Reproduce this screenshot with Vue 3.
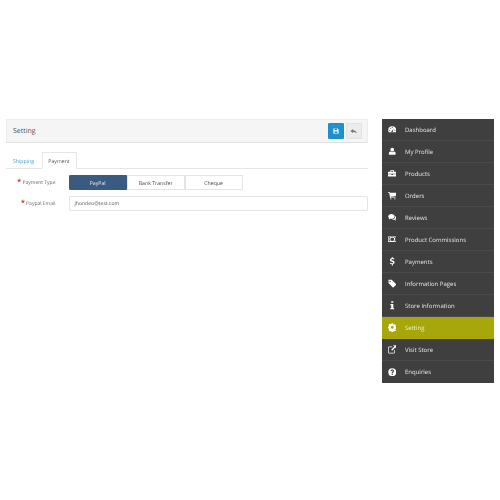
<script setup>
const menu = [
  { label: 'Dashboard', icon: 'dashboard' },
  { label: 'My Profile', icon: 'user' },
  { label: 'Products', icon: 'briefcase' },
  { label: 'Orders', icon: 'cart' },
  { label: 'Reviews', icon: 'comments' },
  { label: 'Product Commissions', icon: 'money' },
  { label: 'Payments', icon: 'dollar' },
  { label: 'Information Pages', icon: 'tag' },
  { label: 'Store Information', icon: 'info' },
  { label: 'Setting', icon: 'cog', active: true },
  { label: 'Visit Store', icon: 'external' },
  { label: 'Enquiries', icon: 'question' },
]

const paymentTypes = ['PayPal', 'Bank Transfer', 'Cheque']
</script>

<template>
  <div class="page">
    <main class="content">
      <div class="panel-head">
        <span class="panel-title">Setting</span>
        <div class="actions">
          <button class="btn btn-save" aria-label="Save">
            <svg viewBox="0 0 16 16" width="6" height="6">
              <path fill="#fff" fill-rule="evenodd" d="M2 1h10l3 3v10a1 1 0 0 1-1 1H2a1 1 0 0 1-1-1V2a1 1 0 0 1 1-1zm2 1v4h7V2H4zm0 7v5h8V9H4z" />
            </svg>
          </button>
          <button class="btn btn-back" aria-label="Back">
            <svg viewBox="0 0 16 16" width="7" height="7">
              <path fill="#777" d="M7 2v3.2c4.600 0 8 2 8 7.800-1.200-3-3.600-4-8-4V12L1 7z" />
            </svg>
          </button>
        </div>
      </div>

      <div class="tabs">
        <a class="tab tab-link">Shipping</a>
        <a class="tab tab-active">Payment</a>
      </div>

      <div class="form-row">
        <label class="form-label"><i>*</i> Payment Type</label>
        <div class="radio-group">
          <span
            v-for="(type, i) in paymentTypes"
            :key="type"
            class="radio-item"
            :class="{ 'radio-item--on': i === 0 }"
          >{{ type }}</span>
        </div>
      </div>

      <div class="form-row">
        <label class="form-label"><i>*</i> Paypal Email</label>
        <div class="text-input">jhondeo@test.com</div>
      </div>
    </main>

    <nav class="sidebar">
      <a
        v-for="item in menu"
        :key="item.label"
        class="menu-item"
        :class="{ 'menu-item--active': item.active }"
      >
        <span class="menu-icon">
          <svg viewBox="0 0 16 16" width="8.500" height="8.500" fill="#fff">
            <path v-if="item.icon === 'dashboard'" fill-rule="evenodd" d="M8 2.500a7.500 7.500 0 0 0-7.500 7.500c0 1.300.3 2.500.9 3.500h13.200c.6-1 .9-2.200.9-3.500A7.500 7.500 0 0 0 8 2.500zM3 9a1 1 0 1 1 0 2 1 1 0 0 1 0-2zm2-4a1 1 0 1 1 0 2 1 1 0 0 1 0-2zm3-1.200a1 1 0 1 1 0 2 1 1 0 0 1 0-2zM13 9a1 1 0 1 1 0 2 1 1 0 0 1 0-2zM11.500 5.500l-2.500 5.200a1.500 1.500 0 1 1-1.200-.5z" />
            <path v-else-if="item.icon === 'user'" d="M8 1.500a3.500 3.500 0 1 1 0 7 3.500 3.500 0 0 1 0-7zM4.500 8.500C5.500 9.400 6.700 9.800 8 9.800s2.500-.4 3.500-1.300c2 .1 3 1.900 3 4.500 0 1-.7 1.700-1.700 1.700H3.200c-1 0-1.700-.7-1.700-1.700 0-2.600 1-4.400 3-4.500z" />
            <path v-else-if="item.icon === 'briefcase'" fill-rule="evenodd" d="M6 2h4a1.500 1.500 0 0 1 1.500 1.500V5H15a1 1 0 0 1 1 1v3H0V6a1 1 0 0 1 1-1h3.500V3.500A1.500 1.500 0 0 1 6 2zm0 1.200V5h4V3.200H6zM0 10h6.500v1.200h3V10H16v3a1 1 0 0 1-1 1H1a1 1 0 0 1-1-1z" />
            <path v-else-if="item.icon === 'cart'" d="M0 2h3l.5 1.500H16l-1.500 6.500-9.500 1 .3 1H14v1.200H4L2.200 3.200H0zM5.500 13.500a1.200 1.200 0 1 1 0 2.400 1.200 1.200 0 0 1 0-2.400zm7.500 0a1.200 1.200 0 1 1 0 2.400 1.200 1.200 0 0 1 0-2.400z" />
            <path v-else-if="item.icon === 'comments'" d="M6.500 2C10 2 12.500 4 12.500 6.500S10 11 6.500 11c-.7 0-1.300-.1-1.900-.2C3.600 11.600 2.500 12 1 12.300c.7-.8 1.200-1.600 1.300-2.500C1 9 .5 7.800.5 6.500.5 4 3 2 6.500 2zM13.500 5.500c1.300.7 2.200 2 2.200 3.300 0 1.200-.6 2.200-1.700 3 .1.800.5 1.500 1.100 2.200-1.400-.2-2.400-.7-3.200-1.300-.5.1-1 .2-1.600.2-1.200 0-2.200-.3-3-.8 3.500-.2 6.400-2.300 6.200-6.600z" />
            <path v-else-if="item.icon === 'money'" fill-rule="evenodd" d="M0 3h16v10H0zm1.200 1.200v7.600h3V10.500H2.800v-5h1.400V4.200zm10.600 0v1.300h1.400v5h-1.400v1.300h3V4.200zM8 4.500a3.500 3.500 0 1 0 0 7 3.500 3.500 0 0 0 0-7z" />
            <path v-else-if="item.icon === 'dollar'" d="M7.200 0h1.600v2c1.400.1 2.600.6 3.400 1.200l-1 1.700c-.8-.6-1.900-1-3-1-1.100 0-1.900.5-1.900 1.200 0 .8.800 1.100 2.500 1.600 2.200.7 3.700 1.400 3.700 3.400 0 1.700-1.300 2.900-3.200 3.200V16H7.200v-2.200c-1.600-.2-2.900-.8-3.900-1.600l1.100-1.600c1 .8 2.200 1.300 3.500 1.300 1.200 0 2-.5 2-1.300S9 9.400 7.400 8.900C5.300 8.300 3.800 7.500 3.800 5.600c0-1.800 1.300-3.200 3.400-3.500z" />
            <path v-else-if="item.icon === 'tag'" fill-rule="evenodd" d="M1 1.500h6l8.200 8.200a1.200 1.200 0 0 1 0 1.700l-4.800 4a1.200 1.200 0 0 1-1.700 0L1 7.500zM4 3.500a1.300 1.300 0 1 0 0 2.600 1.300 1.300 0 0 0 0-2.600z" />
            <path v-else-if="item.icon === 'info'" d="M6 .5h4v3H6zM4.500 5.500H10V13h1.500v2.500h-7V13H6V8H4.500z" />
            <path v-else-if="item.icon === 'cog'" fill-rule="evenodd" d="M6.600.5h2.800l.4 2 1.500.6 1.700-1.100 2 2-1.100 1.700.6 1.500 2 .4v2.800l-2 .4-.6 1.500 1.100 1.700-2 2-1.700-1.100-1.500.6-.4 2H6.600l-.4-2-1.500-.6L3 15.400l-2-2 1.100-1.700-.6-1.500-2-.4V7l2-.4.6-1.500L1 3.400l2-2 1.700 1.100 1.500-.6zM8 5.500a2.700 2.700 0 1 0 0 5.400 2.700 2.700 0 0 0 0-5.400z" />
            <path v-else-if="item.icon === 'external'" d="M2.500 3H8v1.300H2.500a1 1 0 0 0-1 1v8.200a1 1 0 0 0 1 1h8.200a1 1 0 0 0 1-1V9.500H13v4a2.300 2.300 0 0 1-2.300 2.300H2.500A2.300 2.300 0 0 1 .2 13.500V5.300A2.300 2.300 0 0 1 2.500 3zM9.500.5H16V7l-2.300-2.300-6 6-1.700-1.700 6-6z" />
            <path v-else fill-rule="evenodd" d="M8 .5a7.500 7.500 0 1 1 0 15 7.500 7.500 0 0 1 0-15zM7 11v2h2v-2zM8 3C6.300 3 5 3.900 4.700 5.600l1.900.4C6.800 5.200 7.200 4.800 8 4.800c.7 0 1.200.4 1.200 1 0 .5-.4.8-1 1.200C7.400 7.500 7 8.200 7 9.200V10h2v-.5c0-.5.2-.8.800-1.200 1-.6 1.500-1.300 1.500-2.500C11.300 4.100 9.900 3 8 3z" />
          </svg>
        </span>
        <span class="menu-label">{{ item.label }}</span>
      </a>
    </nav>
  </div>
</template>

<style>
html,
body {
  margin: 0;
  background: #fff;
}
</style>

<style scoped>
.page {
  box-sizing: border-box;
  width: 500px;
  height: 500px;
  padding: 119px 6px 0;
  display: flex;
  align-items: flex-start;
  gap: 14px;
  font-family: "Open Sans", "Liberation Sans", sans-serif;
  font-size: 5.200px;
  text-rendering: geometricPrecision;
  color: #555;
  filter: blur(0.25px);
}

.content {
  width: 362px;
}

.panel-head {
  box-sizing: border-box;
  height: 24px;
  padding: 0 5px 0 6px;
  display: flex;
  align-items: center;
  justify-content: space-between;
  background: #f5f5f5;
  border: 1px solid #ececec;
  border-bottom-color: #e0e0e0;
  border-radius: 1px;
}

.panel-title {
  font-size: 7px;
  color: #555;
}

.actions {
  display: flex;
  gap: 1.500px;
}

.btn {
  box-sizing: border-box;
  width: 16.500px;
  height: 16px;
  padding: 0;
  display: flex;
  align-items: center;
  justify-content: center;
  border: 1px solid transparent;
  border-radius: 1px;
}

.btn-save {
  background: #1e91cf;
  border-color: #1e8cc8;
}

.btn-back {
  background: #ececec;
  border-color: #e2e2e2;
}

.tabs {
  margin-top: 9px;
  height: 17px;
  display: flex;
  border-bottom: 1px solid #e6e6e6;
  box-sizing: border-box;
}

.tab {
  box-sizing: border-box;
  height: 17px;
  display: flex;
  align-items: center;
}

.tab-link {
  width: 35.500px;
  padding-left: 7px;
  color: #3a9bd0;
}

.tab-active {
  width: 35px;
  justify-content: center;
  color: #555;
  background: #fff;
  border: 1px solid #e6e6e6;
  border-bottom-color: #fff;
}

.form-row {
  margin-top: 6px;
  display: flex;
  align-items: center;
}

.form-label {
  box-sizing: border-box;
  width: 62.500px;
  padding-right: 13px;
  font-size: 5px;
  text-align: right;
  white-space: nowrap;
  color: #666;
}

.form-label i {
  font-style: normal;
  font-weight: 700;
  font-size: 7px;
  line-height: 0;
  color: #e0281c;
}

.radio-group {
  display: flex;
  height: 15px;
}

.radio-item {
  box-sizing: border-box;
  width: 58.300px;
  margin-right: -0.3px;
  display: flex;
  align-items: center;
  justify-content: center;
  color: #444;
  background: #fff;
  border: 1px solid #e4e4e4;
}

.radio-item--on {
  color: #e8edf3;
  background: #3a5a80;
  border-color: #3a5a80;
  border-radius: 1px 0 0 1px;
}

.text-input {
  box-sizing: border-box;
  width: 299.500px;
  height: 15px;
  padding: 0 5px;
  display: flex;
  align-items: center;
  font-size: 5.100px;
  color: #555;
  background: #fff;
  border: 1px solid #e4e4e4;
  border-radius: 1px;
}

.sidebar {
  width: 112px;
  display: flex;
  flex-direction: column;
  background: #3f3f3f;
  font-size: 6px;
}

.menu-item {
  box-sizing: border-box;
  height: 22px;
  padding-left: 5px;
  display: flex;
  align-items: center;
  color: #e4e4e4;
  border-bottom: 1px solid #4a4a4a;
}

.menu-item:last-child {
  border-bottom: none;
}

.menu-item--active {
  background: #a7a70b;
  border-bottom-color: #a7a70b;
  color: #f0f0c8;
}

.menu-icon {
  width: 10px;
  display: flex;
  justify-content: center;
}

.menu-label {
  margin-left: 8px;
  white-space: nowrap;
}
</style>
